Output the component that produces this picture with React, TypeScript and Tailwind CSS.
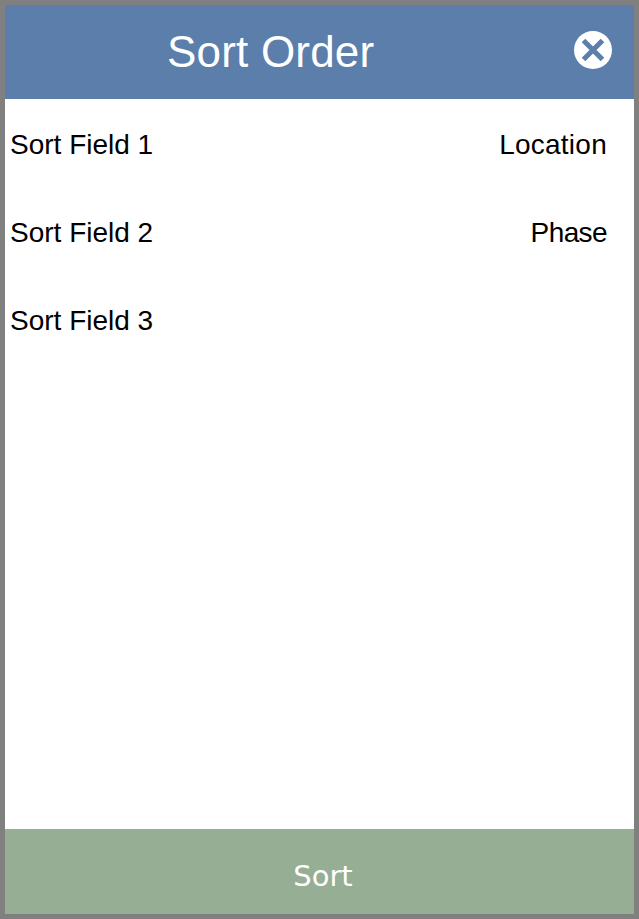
const rows = [
  { label: "Sort Field 1", value: "Location", valueClass: "tracking-[0.25px]" },
  { label: "Sort Field 2", value: "Phase", valueClass: "tracking-[-0.6px]" },
  { label: "Sort Field 3", value: "", valueClass: "" },
];

export default function App() {
  return (
    <div className="flex h-[919px] w-[639px] flex-col border-[5px] border-[#808080] bg-white font-['Liberation_Sans',Arial,sans-serif]">
      <header className="relative flex h-[94px] shrink-0 items-center bg-[#5b7eab] pl-[162px] text-white">
        <h1 className="text-[44px] leading-none font-normal tracking-[0.2px]">Sort Order</h1>
        <button className="absolute top-[26px] right-[22px] h-[38px] w-[38px]" aria-label="Close">
          <svg viewBox="0 0 38 38" className="h-full w-full">
            <circle cx="19" cy="19" r="19" fill="#fff" />
            <path d="M9.5 9.5 L28.5 28.5 M28.5 9.5 L9.5 28.5" stroke="#5b7eab" strokeWidth="5" />
          </svg>
        </button>
      </header>

      <main className="flex flex-1 flex-col pt-[2px] pr-[27px] pl-[5px] text-black">
        {rows.map((r) => (
          <div key={r.label} className="flex h-[88px] items-center justify-between text-[28px]">
            <span>{r.label}</span>
            <span className={r.valueClass}>{r.value}</span>
          </div>
        ))}
      </main>

      <button className="flex h-[85px] shrink-0 items-center justify-center bg-[#96ae94] pt-[10px] pl-[7px] font-['DejaVu_Sans',Verdana,sans-serif] text-[29px] text-white">
        Sort
      </button>
    </div>
  );
}
